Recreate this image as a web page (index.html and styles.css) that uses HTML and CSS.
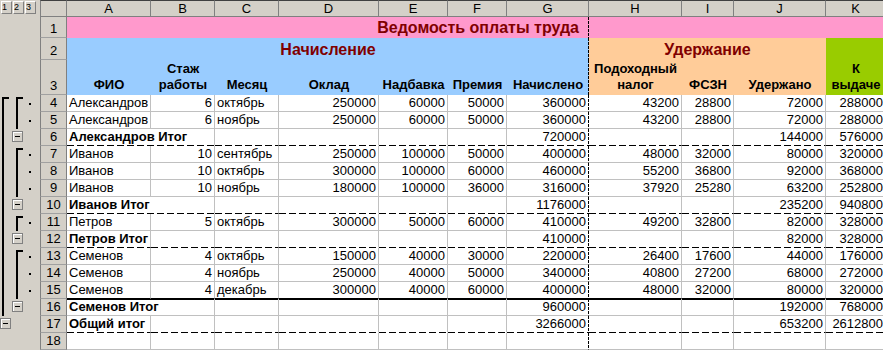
FILE: index.html
```html
<!DOCTYPE html>
<html lang="ru">
<head>
    <meta charset="UTF-8">
    <title>Ведомость оплаты труда</title>
    <link rel="stylesheet" href="styles.css">
</head>
<body>
<div class="sheet">
    <div class="row">
        <div class="ol lvls"><span class="lvl">1</span><span class="lvl">2</span><span class="lvl">3</span></div>
        <div class="ch corner"></div>
        <div class="ch">A</div><div class="ch">B</div><div class="ch">C</div><div class="ch">D</div><div class="ch">E</div><div class="ch">F</div><div class="ch">G</div><div class="ch">H</div><div class="ch">I</div><div class="ch">J</div><div class="ch">K</div>
    </div>

    <div class="row">
        <div class="ol"></div>
        <div class="rh">1</div>
        <div class="title pb">Ведомость оплаты труда</div>
        <div class="title-rest"></div>
    </div>

    <div class="row">
        <div class="ol"></div>
        <div class="rh">2</div>
        <div class="grp blue pb">Начисление</div>
        <div class="grp peach">Удержание</div>
        <div class="hd green k">К<br>выдаче</div>
    </div>

    <div class="row">
        <div class="ol"></div>
        <div class="rh">3</div>
        <div class="hd blue">ФИО</div>
        <div class="hd blue">Стаж<br>работы</div>
        <div class="hd blue">Месяц</div>
        <div class="hd blue">Оклад</div>
        <div class="hd blue">Надбавка</div>
        <div class="hd blue">Премия</div>
        <div class="hd blue pb">Начислено</div>
        <div class="hd peach">Подоходный<br>налог</div>
        <div class="hd peach">ФСЗН</div>
        <div class="hd peach">Удержано</div>
    </div>

    <!-- Александров -->
    <div class="row">
        <div class="ol"><span class="s1"><i class="tp"></i></span><span class="s2"><i class="tp"></i></span><span class="s3"><i class="dt"></i></span></div>
        <div class="rh">4</div>
        <div class="c">Александров</div><div class="c n">6</div><div class="c">октябрь</div><div class="c n">250000</div><div class="c n">60000</div><div class="c n">50000</div><div class="c n pb">360000</div><div class="c n">43200</div><div class="c n">28800</div><div class="c n">72000</div><div class="c n">288000</div>
    </div>
    <div class="row">
        <div class="ol"><span class="s1"><i class="ln"></i></span><span class="s2"><i class="ln"></i></span><span class="s3"><i class="dt"></i></span></div>
        <div class="rh">5</div>
        <div class="c">Александров</div><div class="c n">6</div><div class="c">ноябрь</div><div class="c n">250000</div><div class="c n">60000</div><div class="c n">50000</div><div class="c n pb">360000</div><div class="c n">43200</div><div class="c n">28800</div><div class="c n">72000</div><div class="c n">288000</div>
    </div>
    <div class="row dash">
        <div class="ol"><span class="s1"><i class="ln"></i></span><span class="s2 m"><i class="mn"></i></span></div>
        <div class="rh">6</div>
        <div class="c b wide">Александров Итог</div><div class="c"></div><div class="c"></div><div class="c"></div><div class="c"></div><div class="c n pb">720000</div><div class="c"></div><div class="c"></div><div class="c n">144000</div><div class="c n">576000</div>
    </div>

    <!-- Иванов -->
    <div class="row">
        <div class="ol"><span class="s1"><i class="ln"></i></span><span class="s2"><i class="tp"></i></span><span class="s3"><i class="dt"></i></span></div>
        <div class="rh">7</div>
        <div class="c">Иванов</div><div class="c n">10</div><div class="c">сентябрь</div><div class="c n">250000</div><div class="c n">100000</div><div class="c n">50000</div><div class="c n pb">400000</div><div class="c n">48000</div><div class="c n">32000</div><div class="c n">80000</div><div class="c n">320000</div>
    </div>
    <div class="row">
        <div class="ol"><span class="s1"><i class="ln"></i></span><span class="s2"><i class="ln"></i></span><span class="s3"><i class="dt"></i></span></div>
        <div class="rh">8</div>
        <div class="c">Иванов</div><div class="c n">10</div><div class="c">октябрь</div><div class="c n">300000</div><div class="c n">100000</div><div class="c n">60000</div><div class="c n pb">460000</div><div class="c n">55200</div><div class="c n">36800</div><div class="c n">92000</div><div class="c n">368000</div>
    </div>
    <div class="row">
        <div class="ol"><span class="s1"><i class="ln"></i></span><span class="s2"><i class="ln"></i></span><span class="s3"><i class="dt"></i></span></div>
        <div class="rh">9</div>
        <div class="c">Иванов</div><div class="c n">10</div><div class="c">ноябрь</div><div class="c n">180000</div><div class="c n">100000</div><div class="c n">36000</div><div class="c n pb">316000</div><div class="c n">37920</div><div class="c n">25280</div><div class="c n">63200</div><div class="c n">252800</div>
    </div>
    <div class="row dash">
        <div class="ol"><span class="s1"><i class="ln"></i></span><span class="s2 m"><i class="mn"></i></span></div>
        <div class="rh">10</div>
        <div class="c b wide">Иванов Итог</div><div class="c"></div><div class="c"></div><div class="c"></div><div class="c"></div><div class="c n pb">1176000</div><div class="c"></div><div class="c"></div><div class="c n">235200</div><div class="c n">940800</div>
    </div>

    <!-- Петров -->
    <div class="row">
        <div class="ol"><span class="s1"><i class="ln"></i></span><span class="s2"><i class="tp"></i></span><span class="s3"><i class="dt"></i></span></div>
        <div class="rh">11</div>
        <div class="c">Петров</div><div class="c n">5</div><div class="c">октябрь</div><div class="c n">300000</div><div class="c n">50000</div><div class="c n">60000</div><div class="c n pb">410000</div><div class="c n">49200</div><div class="c n">32800</div><div class="c n">82000</div><div class="c n">328000</div>
    </div>
    <div class="row dash">
        <div class="ol"><span class="s1"><i class="ln"></i></span><span class="s2 m"><i class="mn"></i></span></div>
        <div class="rh">12</div>
        <div class="c b">Петров Итог</div><div class="c"></div><div class="c"></div><div class="c"></div><div class="c"></div><div class="c"></div><div class="c n pb">410000</div><div class="c"></div><div class="c"></div><div class="c n">82000</div><div class="c n">328000</div>
    </div>

    <!-- Семенов -->
    <div class="row">
        <div class="ol"><span class="s1"><i class="ln"></i></span><span class="s2"><i class="tp"></i></span><span class="s3"><i class="dt"></i></span></div>
        <div class="rh">13</div>
        <div class="c">Семенов</div><div class="c n">4</div><div class="c">октябрь</div><div class="c n">150000</div><div class="c n">40000</div><div class="c n">30000</div><div class="c n pb">220000</div><div class="c n">26400</div><div class="c n">17600</div><div class="c n">44000</div><div class="c n">176000</div>
    </div>
    <div class="row">
        <div class="ol"><span class="s1"><i class="ln"></i></span><span class="s2"><i class="ln"></i></span><span class="s3"><i class="dt"></i></span></div>
        <div class="rh">14</div>
        <div class="c">Семенов</div><div class="c n">4</div><div class="c">ноябрь</div><div class="c n">250000</div><div class="c n">40000</div><div class="c n">50000</div><div class="c n pb">340000</div><div class="c n">40800</div><div class="c n">27200</div><div class="c n">68000</div><div class="c n">272000</div>
    </div>
    <div class="row thick">
        <div class="ol"><span class="s1"><i class="ln"></i></span><span class="s2"><i class="ln"></i></span><span class="s3"><i class="dt"></i></span></div>
        <div class="rh">15</div>
        <div class="c">Семенов</div><div class="c n">4</div><div class="c">декабрь</div><div class="c n">300000</div><div class="c n">40000</div><div class="c n">60000</div><div class="c n pb">400000</div><div class="c n">48000</div><div class="c n">32000</div><div class="c n">80000</div><div class="c n">320000</div>
    </div>
    <div class="row after-thick">
        <div class="ol"><span class="s1"><i class="ln"></i></span><span class="s2 m"><i class="mn"></i></span></div>
        <div class="rh">16</div>
        <div class="c b wide">Семенов Итог</div><div class="c"></div><div class="c"></div><div class="c"></div><div class="c"></div><div class="c n pb">960000</div><div class="c"></div><div class="c"></div><div class="c n">192000</div><div class="c n">768000</div>
    </div>

    <!-- итого -->
    <div class="row dash">
        <div class="ol"><span class="s1 m"><i class="mn"></i></span></div>
        <div class="rh">17</div>
        <div class="c b">Общий итог</div><div class="c"></div><div class="c"></div><div class="c"></div><div class="c"></div><div class="c"></div><div class="c n pb">3266000</div><div class="c"></div><div class="c"></div><div class="c n">653200</div><div class="c n">2612800</div>
    </div>
    <div class="row">
        <div class="ol"></div>
        <div class="rh">18</div>
        <div class="c"></div><div class="c"></div><div class="c"></div><div class="c"></div><div class="c"></div><div class="c"></div><div class="c pb"></div><div class="c"></div><div class="c"></div><div class="c"></div><div class="c"></div>
    </div>
</div>
</body>
</html>
```

FILE: styles.css
```css
body {
    margin: 0;
    background: #fff;
    font-family: "Liberation Sans", Arial, sans-serif;
    font-size: 13px;
    color: #000;
    overflow: hidden;
}

.sheet {
    display: grid;
    grid-template-columns: 40px 27px 84px 64px 64px 100px 69px 59px 82px 93px 52px 92px 60px;
    grid-template-rows: 17px 21px 22px 35px repeat(15, 17px);
    width: 886px;
}

.row {
    display: contents;
}

.sheet .row > div {
    box-sizing: border-box;
    line-height: 16px;
    white-space: nowrap;
}

/* outline column */
.ol {
    background: #d4d0c8;
    display: flex;
}

.ol span {
    display: flex;
    box-sizing: border-box;
}

.ol i {
    display: block;
    box-sizing: border-box;
}

.s1 { width: 12px; padding-left: 2px; }
.s2 { width: 12px; padding-left: 4px; }
.s3 { width: 16px; padding-left: 5px; align-items: center; }

.s1.m, .s2.m {
    padding-left: 0;
    padding-top: 2px;
    align-items: flex-start;
}

.ln {
    border-left: 2px solid #000;
}

.tp {
    width: 7px;
    margin-top: 2px;
    border-left: 2px solid #000;
    border-top: 2px solid #000;
}

.dt {
    width: 2px;
    height: 2px;
    background: #000;
}

.mn {
    position: relative;
    width: 11px;
    height: 11px;
    border: 1px solid #808080;
    background: #d4d0c8;
    box-shadow: inset 1px 1px 0 #fff;
}

.mn::before {
    content: "";
    position: absolute;
    left: 2px;
    top: 4px;
    width: 5px;
    height: 1px;
    background: #000;
}

.lvls {
    gap: 1px;
    padding: 1px 0 0 1px;
    align-items: flex-start;
}

.lvl {
    box-sizing: border-box;
    width: 11px;
    height: 13px;
    border: 1px solid;
    border-color: #fff #808080 #808080 #fff;
    font-size: 9px;
    line-height: 11px;
    text-align: center;
}

/* headers */
.ch {
    background: #d4d0c8;
    border-top: 1px solid #404040;
    border-right: 1px solid #808080;
    border-bottom: 1px solid #808080;
    text-align: center;
}

.sheet .row > .ch {
    line-height: 15px;
}

.ch.corner {
    border-left: 1px solid #808080;
}

.rh {
    background: #d4d0c8;
    border-left: 1px solid #808080;
    border-right: 1px solid #808080;
    border-bottom: 1px solid #a0a0a0;
    display: flex;
    align-items: flex-end;
    justify-content: center;
}

/* colored title block */
.title {
    grid-column: span 7;
    background-color: #ff99cc;
    color: #800000;
    font-weight: bold;
    font-size: 16px;
    display: flex;
    align-items: flex-end;
    justify-content: flex-end;
    padding-right: 10px;
}

.title-rest {
    grid-column: span 4;
    background: #ff99cc;
}

.sheet .row > .title,
.sheet .row > .grp {
    line-height: 20px;
}

.grp {
    color: #800000;
    font-weight: bold;
    font-size: 16px;
    display: flex;
    align-items: flex-end;
    justify-content: center;
}

.grp.blue { grid-column: span 7; }
.grp.peach { grid-column: span 3; }

.hd {
    font-weight: bold;
    display: flex;
    align-items: flex-end;
    justify-content: center;
    text-align: center;
    padding-bottom: 2px;
}

.k { grid-row: span 2; }

.blue { background-color: #99ccff; }
.peach { background-color: #ffcc99; }
.green { background-color: #99cc00; }

/* cells */
.c {
    background-color: #fff;
    border-right: 1px solid #c0c0c0;
    border-bottom: 1px solid #c0c0c0;
    padding: 0 2px;
}

.n { text-align: right; }
.b { font-weight: bold; }
.wide { grid-column: span 2; }

/* page break between G and H */
.pb {
    border-right-color: transparent;
    background-image: repeating-linear-gradient(to bottom, #000 0 3px, transparent 3px 4px);
    background-size: 1px 100%;
    background-position: right top;
    background-repeat: no-repeat;
    background-origin: border-box;
}

.dash > .c {
    border-bottom-color: transparent;
    background-image: repeating-linear-gradient(to right, #000 0 7px, transparent 7px 10px);
    background-size: 100% 1px;
    background-position: left bottom;
    background-repeat: no-repeat;
    background-origin: border-box;
}

.dash > .c.pb {
    background-image: repeating-linear-gradient(to bottom, #000 0 3px, transparent 3px 4px),
        repeating-linear-gradient(to right, #000 0 7px, transparent 7px 10px);
    background-size: 1px 100%, 100% 1px;
    background-position: right top, left bottom;
}

.thick > .c {
    border-bottom-color: #000;
}

.after-thick > .c {
    box-shadow: inset 0 1px 0 #000;
}
```
